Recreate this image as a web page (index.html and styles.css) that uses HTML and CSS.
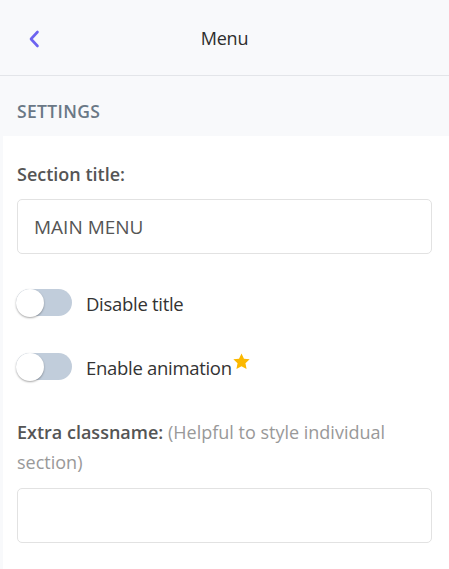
FILE: index.html
```html
<!DOCTYPE html>
<html>
<head>
<meta charset="utf-8">
<link rel="stylesheet" href="styles.css">
</head>
<body>
<div class="app">
  <header class="topbar">
    <button class="back" aria-label="Back">
      <svg width="12" height="18" viewBox="0 0 12 18"><path d="M9.5 2 L3 9 L9.5 16" fill="none" stroke="#6c63f0" stroke-width="2.6" stroke-linecap="round" stroke-linejoin="round"/></svg>
    </button>
    <div class="title">Menu</div>
  </header>
  <div class="section-head">SETTINGS</div>
  <main class="panel">
    <div class="field">
      <label class="label">Section title:</label>
      <div class="input">MAIN MENU</div>
    </div>
    <div class="toggle-row">
      <span class="switch"><span class="knob"></span></span>
      <span class="toggle-text">Disable title</span>
    </div>
    <div class="toggle-row">
      <span class="switch"><span class="knob"></span></span>
      <span class="toggle-text">Enable animation</span>
      <svg class="star" width="19" height="19" viewBox="0 0 24 24"><path d="M12 1.8l3.1 6.6 7.2.9-5.3 5 1.4 7.1L12 17.9l-6.4 3.5L7 14.3l-5.3-5 7.2-.9z" fill="#fbb800"/></svg>
    </div>
    <div class="field extra">
      <p class="label-line"><b class="label">Extra classname:</b> <span class="hint">(Helpful to style individual</span> <span class="hint">section)</span></p>
      <div class="input"></div>
    </div>
  </main>
</div>
</body>
</html>
```
FILE: styles.css
```css
* { box-sizing: border-box; }
html, body { margin: 0; padding: 0; }
body {
  background: #f8f9fb;
  font-family: "Open Sans", "Noto Sans", sans-serif;
  color: #333;
  width: 449px;
  height: 569px;
  overflow: hidden;
}
.app { display: flex; flex-direction: column; height: 100%; }
.topbar {
  height: 76px;
  display: flex;
  align-items: center;
  border-bottom: 1px solid #e3e5e9;
  padding: 0 0 0 28px;
}
.back {
  background: none; border: 0; padding: 0; margin: 0;
  width: 12px; height: 20px;
  display: flex; align-items: center; justify-content: center;
  cursor: pointer;
  margin-top: 2px;
}
.title {
  flex: 1;
  text-align: center;
  font-size: 18px;
  color: #2d2d2d;
  margin-right: 40px;
  letter-spacing: -0.2px;
}
.section-head {
  height: 60px;
  padding: 10px 17px 0;
  display: flex;
  align-items: center;
  font-size: 17.5px;
  font-weight: 600;
  color: #6a7886;
  letter-spacing: 0.35px;
}
.panel {
  flex: 1;
  background: #fff;
  margin-left: 3px;
  padding: 26px 17px 0 14px;
}
.field { display: flex; flex-direction: column; }
.label {
  font-size: 18px;
  font-weight: 600;
  color: #555;
}
.field > .label { margin-bottom: 13px; line-height: 24px; }
.input {
  height: 55px;
  border: 1px solid #e2e2e2;
  border-radius: 5px;
  background: #fff;
  padding: 0 16px;
  display: flex;
  align-items: center;
  font-size: 19px;
  color: #555;
}
.toggle-row {
  display: flex;
  align-items: center;
  height: 28px;
}
.field + .toggle-row { margin-top: 34px; }
.toggle-row + .toggle-row { margin-top: 36px; }
.switch {
  width: 56px; height: 27px;
  border-radius: 14px;
  background: #c1cddb;
  position: relative;
  margin-left: -1px;
  flex: none;
}
.knob {
  position: absolute; left: 0; top: 0;
  width: 28px; height: 28px;
  border-radius: 50%;
  background: #fff;
  box-shadow: 0 1px 2px rgba(0,0,0,0.35);
}
.toggle-text {
  margin-left: 14px;
  font-size: 18.5px;
  color: #333;
  margin-top: 3px;
  letter-spacing: -0.3px;
}
.star { align-self: flex-start; margin-top: 0; }
.extra { margin-top: 37px; }
.label-line {
  margin: 0 0 11px;
  line-height: 30px;
  font-size: 18px;
}
.hint { color: #999; }
```
